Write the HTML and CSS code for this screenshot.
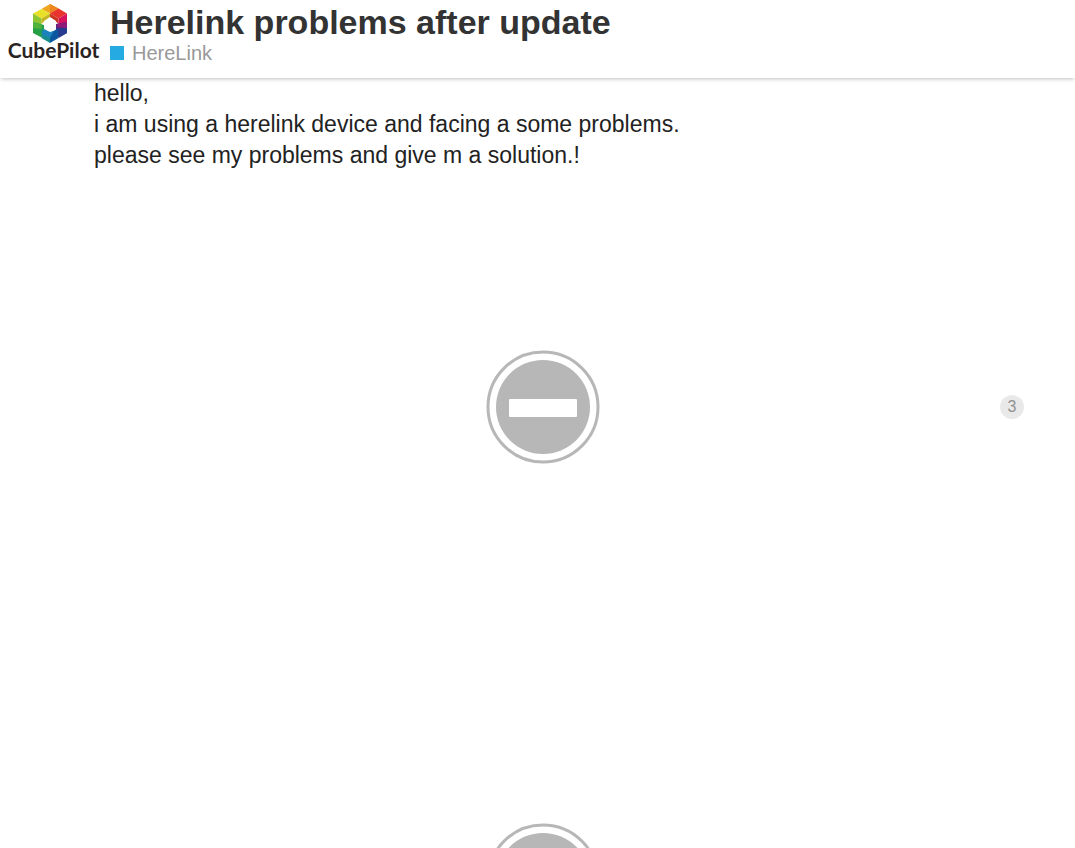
FILE: index.html
```html
<!DOCTYPE html>
<html lang="en">
  <head>
    <meta charset="UTF-8" />
    <meta name="viewport" content="width=device-width, initial-scale=1.0" />
    <title>Herelink problems after update - HereLink - CubePilot</title>
    <link rel="stylesheet" href="styles.css">
  </head>
  <body>
    <header class="site-header">
      <a href="#" class="logo">
        <svg class="logo-cube" viewBox="0 0 36 40" aria-hidden="true">
          <polygon points="18,0 26.5,4.5 18,9.5 9.5,5" fill="#f0a51e" />
          <polygon points="18,0 26.5,4.5 18,9.5" fill="#ee8520" />
          <polygon points="9.5,5 18,9.5 9.5,14.5 1,9.5" fill="#e9e02a" />
          <polygon points="26.5,4.5 35,9.5 26.5,14.5 18,9.5" fill="#e8342c" />
          <polygon points="1,9.5 9.5,14.5 9.5,22 1,18" fill="#8fc531" />
          <polygon points="9.5,14.5 18,9.5 18,14 12,17.5 9.5,20" fill="#c5b51e" />
          <polygon points="35,9.5 35,19 26.5,22 26.5,14.5" fill="#d8125c" />
          <polygon points="18,9.5 26.5,14.5 26.5,20 23.5,17 18,14" fill="#cc3522" />
          <polygon points="1,18 12,21 12,25 9.5,33.5 1,29" fill="#26a045" />
          <polygon points="1,18 9.5,21 9.5,25 1,24" fill="#4fb33c" />
          <polygon points="35,18 35,29 26.5,33.5 24,25 24,20" fill="#5b2482" />
          <polygon points="35,18 35,24 25,23 25,20" fill="#911b78" />
          <polygon points="9.5,25 18,29 18,39 9.5,34" fill="#168d8c" />
          <polygon points="18,29 26.5,24 26.5,34 18,39" fill="#0c569f" />
          <polygon points="12,25 18,28 22,27 18,34 9.5,30" fill="#1c82bd" />
          <polygon points="26.5,24 35,24 35,29 26.5,34" fill="#273c8e" />
          <polygon points="18,13 24,17 24,25 21,27 18,27 12,24 12,17" fill="#fff" />
        </svg>
        <span class="logo-text">CubePilot</span>
      </a>
      <div class="title-wrapper">
        <h1>Herelink problems after update</h1>
        <a href="#" class="category">HereLink</a>
      </div>
    </header>

    <main class="post">
      <p>
        hello,<br />
        i am using a herelink device and facing a some problems.<br />
        please see my problems and give m a solution.!
      </p>

      <div class="image-row">
        <a href="#" class="image-link" aria-label="Image unavailable">
          <svg class="no-image" viewBox="0 0 114 114" aria-hidden="true">
            <circle class="ring" cx="57" cy="57" r="55" />
            <circle class="disc" cx="57" cy="57" r="47" />
            <rect class="bar" x="23" y="49" width="68" height="18" rx="1" />
          </svg>
        </a>
        <span class="clicks">3</span>
      </div>

      <div class="image-row">
        <a href="#" class="image-link" aria-label="Image unavailable">
          <svg class="no-image" viewBox="0 0 114 114" aria-hidden="true">
            <circle class="ring" cx="57" cy="57" r="55" />
            <circle class="disc" cx="57" cy="57" r="47" />
            <rect class="bar" x="23" y="49" width="68" height="18" rx="1" />
          </svg>
        </a>
      </div>
    </main>
  </body>
</html>
```
FILE: styles.css
```css
/* Global Styles */
* {
  box-sizing: border-box;
}

body {
  display: flex;
  flex-direction: column;
  height: 100vh;
  margin: 0;
  overflow: hidden;
  background: #fff;
  color: #222;
  font-family: "Liberation Sans", Arial, sans-serif;
}

a {
  color: inherit;
  text-decoration: none;
}

/* Header */
.site-header {
  display: flex;
  flex-shrink: 0;
  gap: 11px;
  height: 78px;
  padding: 4px 8px 0;
  box-shadow: 0 2px 4px -1px rgba(0, 0, 0, 0.25);
}

.logo {
  display: flex;
  flex-direction: column;
  align-items: center;
  width: 91px;
}

.logo-cube {
  width: 36px;
  height: 40px;
  margin-right: 8px;
}

.logo-text {
  color: #2b2322;
  font-family: Lato, sans-serif;
  font-size: 21px;
  font-weight: 700;
  line-height: 12px;
}

.title-wrapper {
  flex: 1;
}

h1 {
  margin: 0;
  color: #333;
  font-size: 34px;
  line-height: 36px;
}

.category {
  display: flex;
  align-items: center;
  gap: 8px;
  color: #999;
  font-size: 20px;
  line-height: 26px;
}

.category::before {
  content: "";
  width: 14px;
  height: 14px;
  background: #25aae2;
}

/* Post */
.post {
  padding: 0 51px 0 94px;
  overflow: hidden;
}

.post p {
  margin: 0;
  font-size: 23px;
  line-height: 31px;
}

.image-row {
  display: flex;
  align-items: center;
  gap: 8px;
  height: 473px;
  padding: 0 32px 2px 0;
}

.image-row:has(.clicks) {
  padding-right: 0;
}

.image-link {
  display: flex;
  flex: 1;
  justify-content: center;
}

.no-image {
  width: 114px;
  height: 114px;
}

.ring {
  fill: none;
  stroke: #b7b7b7;
  stroke-width: 3;
}

.disc {
  fill: #b7b7b7;
}

.bar {
  fill: #fff;
}

.clicks {
  width: 24px;
  height: 24px;
  border-radius: 50%;
  background: #e9e9e9;
  color: #919191;
  font-size: 16px;
  line-height: 24px;
  text-align: center;
}
```
